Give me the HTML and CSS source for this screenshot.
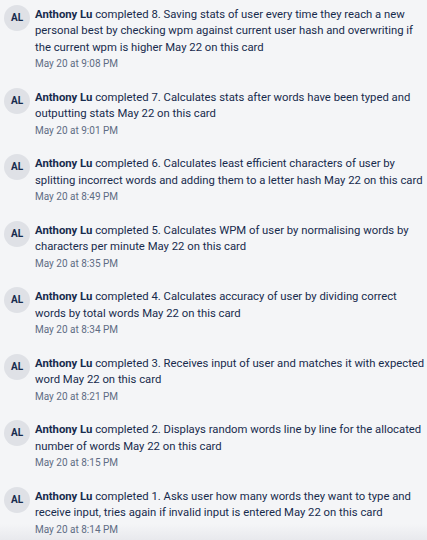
FILE: index.html
```html
<!DOCTYPE html>
<html>
<head>
<meta charset="utf-8">
<link rel="stylesheet" href="styles.css">
</head>
<body>
<div class="feed">
  <div class="item">
    <div class="avatar">AL</div>
    <div class="content">
      <div class="desc"><span class="name">Anthony Lu</span> completed 8. Saving stats of user every time they reach a new personal best by checking wpm against current user hash and overwriting if the current wpm is higher May 22 on this card</div>
      <div class="time">May 20 at 9:08 PM</div>
    </div>
  </div>
  <div class="item">
    <div class="avatar">AL</div>
    <div class="content">
      <div class="desc"><span class="name">Anthony Lu</span> completed 7. Calculates stats after words have been typed and outputting stats May 22 on this card</div>
      <div class="time">May 20 at 9:01 PM</div>
    </div>
  </div>
  <div class="item">
    <div class="avatar">AL</div>
    <div class="content">
      <div class="desc"><span class="name">Anthony Lu</span> completed 6. Calculates least efficient characters of user by splitting incorrect words and adding them to a letter hash May 22 on this card</div>
      <div class="time">May 20 at 8:49 PM</div>
    </div>
  </div>
  <div class="item">
    <div class="avatar">AL</div>
    <div class="content">
      <div class="desc"><span class="name">Anthony Lu</span> completed 5. Calculates WPM of user by normalising words by characters per minute May 22 on this card</div>
      <div class="time">May 20 at 8:35 PM</div>
    </div>
  </div>
  <div class="item">
    <div class="avatar">AL</div>
    <div class="content">
      <div class="desc"><span class="name">Anthony Lu</span> completed 4. Calculates accuracy of user by dividing correct words by total words May 22 on this card</div>
      <div class="time">May 20 at 8:34 PM</div>
    </div>
  </div>
  <div class="item">
    <div class="avatar">AL</div>
    <div class="content">
      <div class="desc"><span class="name">Anthony Lu</span> completed 3. Receives input of user and matches it with expected word May 22 on this card</div>
      <div class="time">May 20 at 8:21 PM</div>
    </div>
  </div>
  <div class="item">
    <div class="avatar">AL</div>
    <div class="content">
      <div class="desc"><span class="name">Anthony Lu</span> completed 2. Displays random words line by line for the allocated number of words May 22 on this card</div>
      <div class="time">May 20 at 8:15 PM</div>
    </div>
  </div>
  <div class="item">
    <div class="avatar">AL</div>
    <div class="content">
      <div class="desc"><span class="name">Anthony Lu</span> completed 1. Asks user how many words they want to type and receive input, tries again if invalid input is entered May 22 on this card</div>
      <div class="time">May 20 at 8:14 PM</div>
    </div>
  </div>
</div>
</body>
</html>
```

FILE: styles.css
```css
html {
  background: linear-gradient(to bottom, #f4f5f7 0, #f4f5f7 calc(100% - 16px), #e8e9ed 100%) fixed;
  min-height: 100%;
}
body {
  margin: 0;
  font-family: Roboto, "Liberation Sans", sans-serif;
  color: #172b4d;
}
.feed {
  display: flex;
  flex-direction: column;
  gap: 16.7px;
  padding: 6.7px 0 0 4px;
}
.item {
  display: flex;
  align-items: flex-start;
}
.avatar {
  flex: 0 0 auto;
  width: 26px;
  height: 26px;
  margin-top: -2px;
  margin-right: 5px;
  border-radius: 50%;
  background: #dfe1e6;
  color: #172b4d;
  font-size: 10px;
  line-height: 26px;
  font-weight: 700;
  text-align: center;
}
.content {
  flex: 1 1 auto;
  min-width: 0;
}
.desc {
  font-size: 11.3px;
  line-height: 16.6px;
}
.name {
  font-weight: 700;
}
.time {
  font-size: 10px;
  line-height: 16.6px;
  color: #5e6c84;
}
```
